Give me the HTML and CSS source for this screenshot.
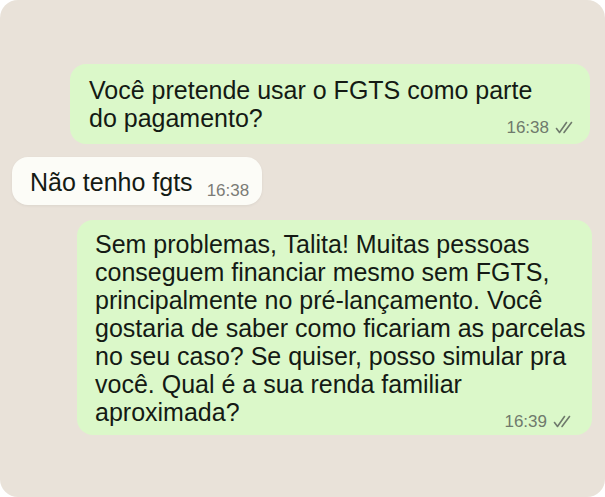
FILE: index.html
```html
<!DOCTYPE html>
<html lang="pt-BR">
<head>
<meta charset="utf-8">
<title>Conversa</title>
<link rel="stylesheet" href="styles.css">
</head>
<body>
<div class="chat">
  <div class="bubble out b1">
    <p class="text">Você pretende usar o FGTS como parte<br>do pagamento?</p>
    <span class="meta"><span class="time">16:38</span><svg class="ticks" width="20" height="13" viewBox="0 0 20 13"><path d="M1.5 7.5 L4.5 11.5 L11.5 1.5 M9 11.5 L16.5 1.5" fill="none" stroke="currentColor" stroke-width="1.6" stroke-linecap="round" stroke-linejoin="round"/></svg></span>
  </div>
  <div class="bubble in b2">
    <p class="text">Não tenho fgts</p>
    <span class="meta"><span class="time">16:38</span></span>
  </div>
  <div class="bubble out b3">
    <p class="text">Sem problemas, Talita! Muitas pessoas<br>conseguem financiar mesmo sem FGTS,<br>principalmente no pré-lançamento. Você<br>gostaria de saber como ficariam as parcelas<br>no seu caso? Se quiser, posso simular pra<br>você. Qual é a sua renda familiar<br>aproximada?</p>
    <span class="meta"><span class="time">16:39</span><svg class="ticks" width="20" height="13" viewBox="0 0 20 13"><path d="M1.5 7.5 L4.5 11.5 L11.5 1.5 M9 11.5 L16.5 1.5" fill="none" stroke="currentColor" stroke-width="1.6" stroke-linecap="round" stroke-linejoin="round"/></svg></span>
  </div>
</div>
</body>
</html>
```
FILE: styles.css
```css
* { box-sizing: border-box; }
html, body { margin: 0; padding: 0; background: #ffffff; }
body { width: 605px; height: 497px; overflow: hidden; }
.chat {
  width: 605px;
  height: 497px;
  border-radius: 18px;
  background: #e9e2d9;
  display: flex;
  flex-direction: column;
  padding-top: 64px;
  font-family: "Liberation Sans", Arial, sans-serif;
  color: #141a14;
}
.bubble {
  display: grid;
  grid-template-columns: minmax(0, 1fr);
  border-radius: 16px;
}
.bubble .text {
  grid-area: 1 / 1;
  margin: 0;
  font-size: 25px;
  line-height: 28px;
  white-space: nowrap;
}
.bubble .meta {
  grid-area: 1 / 1;
  justify-self: end;
  align-self: end;
  display: flex;
  align-items: center;
  gap: 6px;
  font-size: 17px;
  line-height: 17px;
  color: #6f7a6c;
  margin-bottom: -4px;
}
.out { background: #dbf8c9; }
.in {
  background: #fcfcf7;
  box-shadow: 0 1px 3px rgba(0,0,0,0.06);
}
.b1 {
  align-self: flex-end;
  margin-right: 15px;
  width: 520px;
  padding: 12px 15px 12px 19px;
}
.b2 {
  align-self: flex-start;
  margin-left: 12px;
  margin-top: 13px;
  display: flex;
  align-items: baseline;
  gap: 14px;
  padding: 11px 13px 9px 18px;
}
.b2 .meta {
  color: #7b7b76;
  margin-bottom: 0;
  position: relative;
  top: 3px;
}
.b3 {
  align-self: flex-end;
  margin-right: 13px;
  margin-top: 15px;
  width: 515px;
  padding: 10px 19px 9px 18px;
}
.ticks { display: block; }
```
